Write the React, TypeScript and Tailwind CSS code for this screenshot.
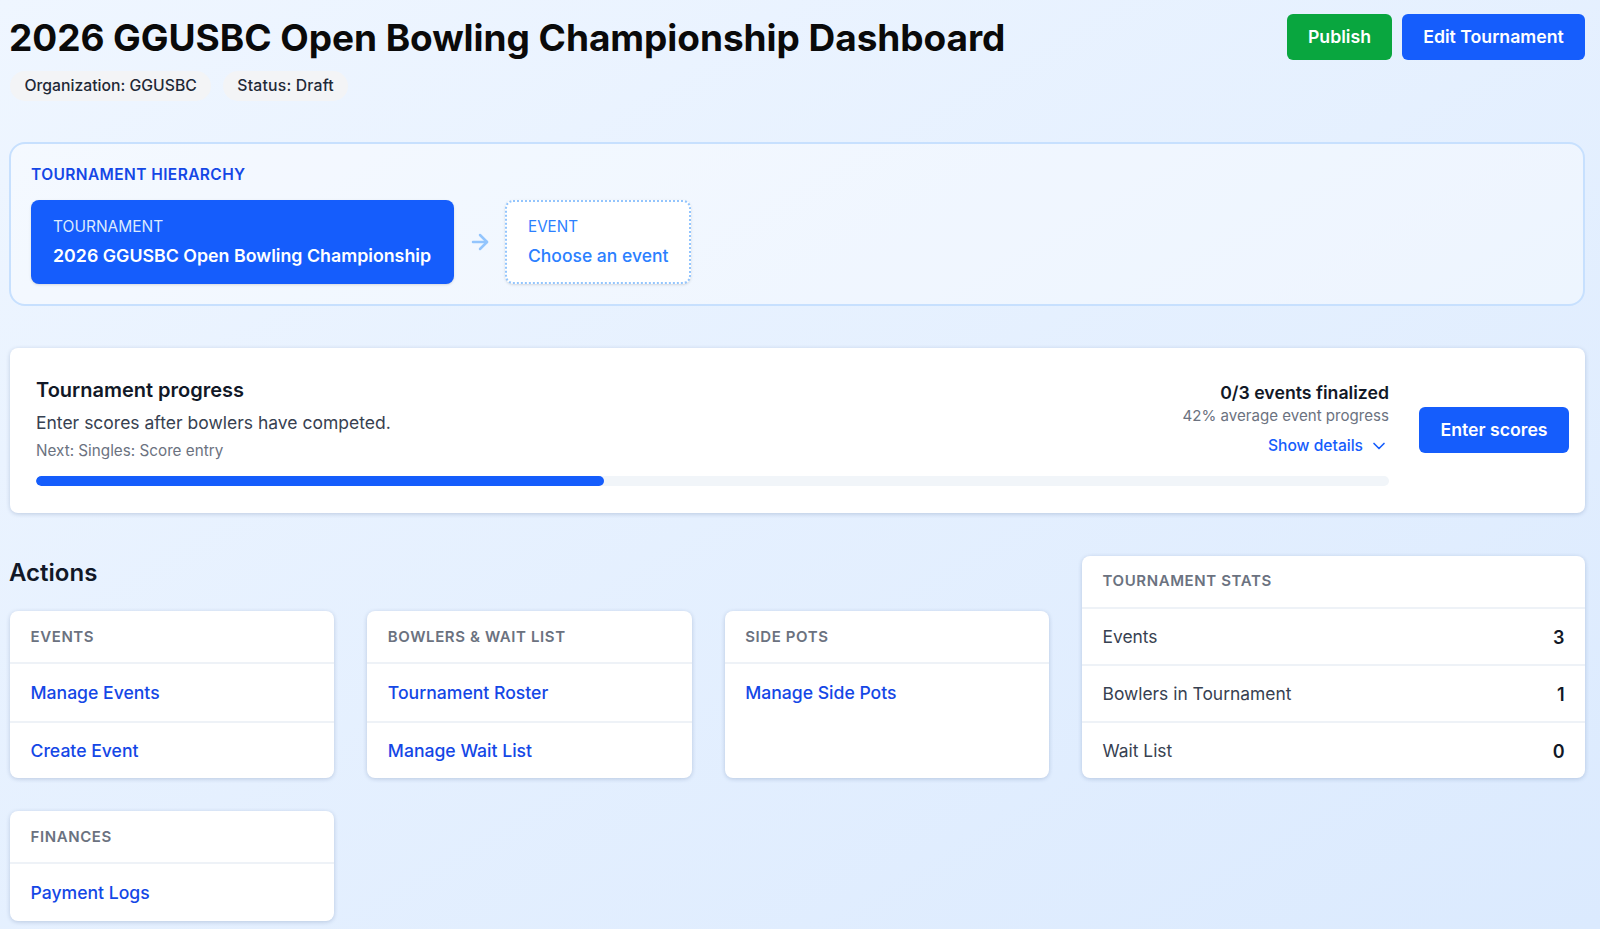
import { ArrowRight, ChevronDown } from 'lucide-react';

const font = { fontFamily: 'Inter, "Liberation Sans", sans-serif' };

function ActionCard({ title, links, className = '' }: { title: string; links: string[]; className?: string }) {
  return (
    <div className={`bg-white rounded-lg shadow-[0_1px_4px_rgba(30,64,120,0.22)] overflow-hidden ${className}`}>
      <div className="h-[53px] pt-px px-[20.5px] flex items-center border-b-2 border-[#eef2f7] text-[15px] font-semibold tracking-[0.6px] text-[#6b7280]">
        {title}
      </div>
      {links.map((link, i) => (
        <a
          key={link}
          href="#"
          className={`h-[57px] pt-[2px] px-[20.5px] flex items-center text-[17.6px] font-medium text-[#1447e6] ${
            i > 0 ? 'border-t-2 border-[#eef2f7]' : ''
          }`}
        >
          {link}
        </a>
      ))}
    </div>
  );
}

function StatRow({ label, value }: { label: string; value: number }) {
  return (
    <div className="h-[57px] pt-[2px] px-[20.5px] flex items-center justify-between border-t-2 border-[#eef2f7] text-[17.4px] text-[#374151]">
      <span>{label}</span>
      <span className="text-[18px] font-semibold text-[#111827]">{value}</span>
    </div>
  );
}

export default function App() {
  return (
    <div
      style={font}
      className="h-[929px] overflow-hidden bg-gradient-to-br from-[#eff6ff] to-[#dbeafe] pl-[10px] pr-[15px] pt-[14px]"
    >
      {/* Header */}
      <div className="flex justify-between items-start">
        <div>
          <h1 className="-ml-px text-[37px] leading-[48px] font-bold tracking-[-0.05px] text-[#0a0a0a]">
            2026 GGUSBC Open Bowling Championship Dashboard
          </h1>
          <div className="flex gap-[12px] mt-[9px]">
            <span className="h-[30px] px-[14.5px] flex items-center rounded-full bg-[#f3f4f6] text-[15.75px] font-medium text-[#1f2937]">
              Organization: GGUSBC
            </span>
            <span className="h-[30px] px-[14px] flex items-center rounded-full bg-[#f3f4f6] text-[15.75px] tracking-[0.2px] font-medium text-[#1f2937]">
              Status: Draft
            </span>
          </div>
        </div>
        <div className="flex gap-[10px]">
          <button className="h-[46px] w-[105px] pt-px rounded-md bg-[#09a63f] text-white text-[17.7px] font-semibold">Publish</button>
          <button className="h-[46px] w-[183px] pt-px rounded-md bg-[#155dfc] text-white text-[17.7px] font-semibold">Edit Tournament</button>
        </div>
      </div>

      {/* Hierarchy */}
      <div className="-ml-px mt-[41px] h-[164px] rounded-2xl border-2 border-[#c7e0fe] bg-white/40 px-[20px] pt-[21px]">
        <div className="text-[15.5px] leading-[20px] font-semibold tracking-[0.4px] text-[#1447e6]">TOURNAMENT HIERARCHY</div>
        <div className="flex items-center mt-[15px]">
          <div className="h-[84px] w-[423px] pt-[2px] rounded-lg bg-[#155dfc] px-[22px] flex flex-col justify-center shadow-sm whitespace-nowrap">
            <div className="text-[15.5px] leading-[20px] text-[#dbeafe]">TOURNAMENT</div>
            <div className="text-[17.8px] leading-[28px] font-semibold text-white mt-[5px]">2026 GGUSBC Open Bowling Championship</div>
          </div>
          <ArrowRight className="w-[24px] h-[24px] ml-[14px] mr-[13px] text-[#93c5fd]" strokeWidth={2.5} />
          <div className="h-[84px] w-[186px] pt-[2px] rounded-lg bg-white border-2 border-dotted border-[#93c5fd] px-[21px] flex flex-col justify-center whitespace-nowrap shadow-sm">
            <div className="text-[15.2px] leading-[20px] text-[#2b7fff]">EVENT</div>
            <div className="text-[17.5px] leading-[28px] font-medium text-[#2b7fff] mt-[5px]">Choose an event</div>
          </div>
        </div>
      </div>

      {/* Progress */}
      <div className="mt-[42px] h-[165px] rounded-lg bg-white shadow-[0_1px_4px_rgba(30,64,120,0.22)] pl-[26px] pr-[16px] flex items-center gap-[30px]">
        <div className="flex-1">
          <div className="flex justify-between">
            <div>
              <div className="text-[20px] leading-[28px] font-semibold text-[#111827]">Tournament progress</div>
              <div className="text-[17.5px] leading-[28px] text-[#374151] mt-[5px]">Enter scores after bowlers have competed.</div>
              <div className="text-[15.25px] leading-[20px] text-[#6b7280] mt-[4px]">Next: Singles: Score entry</div>
            </div>
            <div className="flex flex-col items-end pt-[3px]">
              <div className="text-[17.7px] leading-[28px] font-semibold text-[#111827]">0/3 events finalized</div>
              <div className="text-[15.1px] leading-[18px] text-[#6b7280]">42% average event progress</div>
              <button className="flex items-center gap-[6px] mt-[11px] text-[15.6px] leading-[20px] font-medium text-[#155dfc]">
                Show details
                <ChevronDown className="w-[20px] h-[20px]" />
              </button>
            </div>
          </div>
          <div className="h-[10px] rounded-full bg-[#f1f5f9] mt-[15px] overflow-hidden">
            <div className="h-full w-[42%] rounded-full bg-[#155dfc]" />
          </div>
        </div>
        <button className="h-[46px] w-[150px] pt-px mb-[2px] rounded-md bg-[#155dfc] text-white text-[17.7px] font-semibold">Enter scores</button>
      </div>

      {/* Actions and stats */}
      <div className="mt-[43px] flex gap-[33px] items-start">
        <div className="w-[1039px]">
          <h2 className="-ml-px text-[24px] leading-[38px] font-semibold text-[#111827] -mt-[2px]">Actions</h2>
          <div className="grid grid-cols-3 gap-x-[33px] gap-y-[33px] mt-[19px]">
            <ActionCard title="EVENTS" links={['Manage Events', 'Create Event']} />
            <ActionCard title="BOWLERS & WAIT LIST" links={['Tournament Roster', 'Manage Wait List']} />
            <ActionCard title="SIDE POTS" links={['Manage Side Pots']} />
            <ActionCard title="FINANCES" links={['Payment Logs']} />
          </div>
        </div>
        <div className="flex-1 bg-white rounded-lg shadow-[0_1px_4px_rgba(30,64,120,0.22)] overflow-hidden">
          <div className="h-[51px] px-[20.5px] flex items-center text-[15px] font-semibold tracking-[0.6px] text-[#6b7280]">
            TOURNAMENT STATS
          </div>
          <StatRow label="Events" value={3} />
          <StatRow label="Bowlers in Tournament" value={1} />
          <StatRow label="Wait List" value={0} />
        </div>
      </div>
    </div>
  );
}
